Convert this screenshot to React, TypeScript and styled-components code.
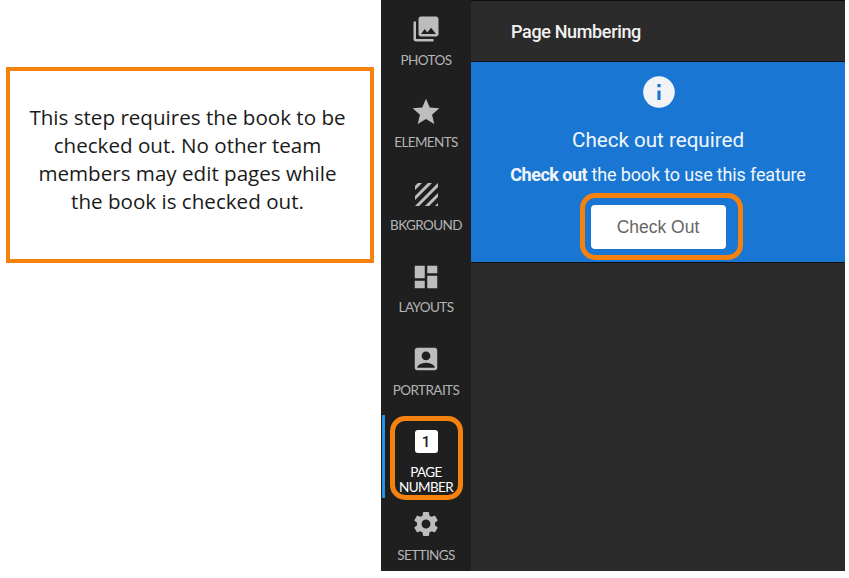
import styled, { createGlobalStyle } from "styled-components";
import { MdAccountBox, MdDashboard, MdInfo, MdPhotoLibrary, MdSettings, MdStar } from "react-icons/md";

const GlobalStyle = createGlobalStyle`
  html, body {
    margin: 0;
    background: #fff;
  }
`;

const Page = styled.div`
  display: grid;
  grid-template-columns: 381px 90px 374px;
  height: 571px;
`;
const Note = styled.div`
  padding: 67px 0 0 6px;
`;
const NoteBox = styled.div`
  box-sizing: border-box;
  width: 368px;
  height: 196px;
  border: 4px solid #f5810f;
  display: flex;
  align-items: center;
  justify-content: center;
  padding: 0 21px 13px 16px;
  font-family: "Open Sans", sans-serif;
  font-size: 20.6px;
  line-height: 28px;
  text-align: center;
  color: #1a1a1a;
`;
const Sidebar = styled.nav`
  background: #1f1f1f;
  display: flex;
  flex-direction: column;
`;
const NavItem = styled.div<{ $active?: boolean }>`
  position: relative;
  box-sizing: border-box;
  height: 82.5px;
  padding-top: 15px;
  display: flex;
  flex-direction: column;
  align-items: center;
  color: ${(props) => (props.$active ? "#fff" : "#b4b4b4")};

  ${(props) =>
    props.$active &&
    `
    &::before {
      content: "";
      position: absolute;
      left: 1px;
      top: 2px;
      width: 3px;
      height: 83px;
      background: #2b8fe0;
    }
    &::after {
      content: "";
      position: absolute;
      left: 9px;
      top: 3px;
      width: 63px;
      height: 74px;
      border: 5px solid #f5810f;
      border-radius: 15px;
    }
  `}
`;
const IconSlot = styled.div`
  height: 28px;
  display: flex;
  align-items: center;
  justify-content: center;
  color: #bdbdbd;
`;
const NumberIcon = styled.div`
  width: 23px;
  height: 23px;
  border-radius: 3px;
  background: #fff;
  color: #1c1c1c;
  display: flex;
  align-items: center;
  justify-content: center;
  font-family: "Roboto", sans-serif;
  font-size: 15px;
  font-weight: 500;
`;
const NavLabel = styled.div`
  margin-top: 9.5px;
  max-width: 72px;
  font-family: "Lato", sans-serif;
  font-size: 13.5px;
  line-height: 15px;
  letter-spacing: -0.6px;
  text-align: center;
`;
const Panel = styled.main`
  background: #2b2b2b;
  font-family: "Roboto", sans-serif;
`;
const PanelHeader = styled.header`
  box-sizing: border-box;
  height: 62px;
  border-top: 1px solid #0c0c0c;
  border-bottom: 1px solid #111;
  padding: 0 0 0 40px;
  display: flex;
  align-items: center;
  font-size: 18px;
  font-weight: 500;
  letter-spacing: -0.35px;
  color: #f2f2f2;
`;
const Banner = styled.section`
  box-sizing: border-box;
  height: 201px;
  background: #1976d2;
  border-bottom: 1px solid #0e0e0e;
  padding-top: 11px;
  display: flex;
  flex-direction: column;
  align-items: center;
  color: #f1f6fc;
`;
const InfoIcon = styled.div`
  width: 38px;
  height: 38px;
  margin-left: 1px;
  display: flex;
  color: #f1f3f6;
`;
const BannerTitle = styled.h2`
  margin: 17px 0 0;
  font-size: 20.6px;
  line-height: 24px;
  font-weight: 400;
`;
const BannerText = styled.p`
  margin: 12px 0 0;
  font-size: 18px;
  line-height: 22px;
  letter-spacing: -0.15px;

  b {
    font-weight: 700;
    letter-spacing: -0.5px;
  }
`;
const ButtonRing = styled.div`
  margin: 7px 0 0 6px;
  padding: 7px 12px 6px 6px;
  box-sizing: border-box;
  width: 163px;
  height: 67px;
  border: 5px solid #f5810f;
  border-radius: 15px;
`;
const CheckOutButton = styled.button`
  display: block;
  width: 135px;
  height: 44px;
  border: 0;
  border-radius: 4px;
  background: #fff;
  color: #666;
  font-family: "Liberation Sans", sans-serif;
  font-size: 17.5px;
  padding: 0;
`;

function HatchIcon() {
  return (
    <svg width="23" height="23" viewBox="0 0 23 23" stroke="#bdbdbd" strokeWidth="3" fill="none">
      <clipPath id="hatch-clip">
        <rect width="23" height="23" />
      </clipPath>
      <g clipPath="url(#hatch-clip)">
        <path d="M-1 6L6 -1M-1 16L16 -1M-1 26L26 -1M7 28L28 7M18 27L27 18" />
      </g>
    </svg>
  );
}

const navItems = [
  { label: "PHOTOS", icon: <MdPhotoLibrary size={30} /> },
  { label: "ELEMENTS", icon: <MdStar size={32} /> },
  { label: "BKGROUND", icon: <HatchIcon /> },
  { label: "LAYOUTS", icon: <MdDashboard size={30} /> },
  { label: "PORTRAITS", icon: <MdAccountBox size={30} /> },
  { label: "PAGE NUMBER", icon: <NumberIcon>1</NumberIcon>, active: true },
  { label: "SETTINGS", icon: <MdSettings size={30} /> },
];

function App() {
  return (
    <Page>
      <GlobalStyle />
      <Note>
        <NoteBox>
          This step requires the book to be checked out. No other team members may edit pages while the book is checked out.
        </NoteBox>
      </Note>
      <Sidebar>
        {navItems.map((item) => (
          <NavItem key={item.label} $active={item.active}>
            <IconSlot>{item.icon}</IconSlot>
            <NavLabel>{item.label}</NavLabel>
          </NavItem>
        ))}
      </Sidebar>
      <Panel>
        <PanelHeader>Page Numbering</PanelHeader>
        <Banner>
          <InfoIcon>
            <MdInfo size={38} />
          </InfoIcon>
          <BannerTitle>Check out required</BannerTitle>
          <BannerText>
            <b>Check out</b> the book to use this feature
          </BannerText>
          <ButtonRing>
            <CheckOutButton>Check Out</CheckOutButton>
          </ButtonRing>
        </Banner>
      </Panel>
    </Page>
  );
}

export default App;
